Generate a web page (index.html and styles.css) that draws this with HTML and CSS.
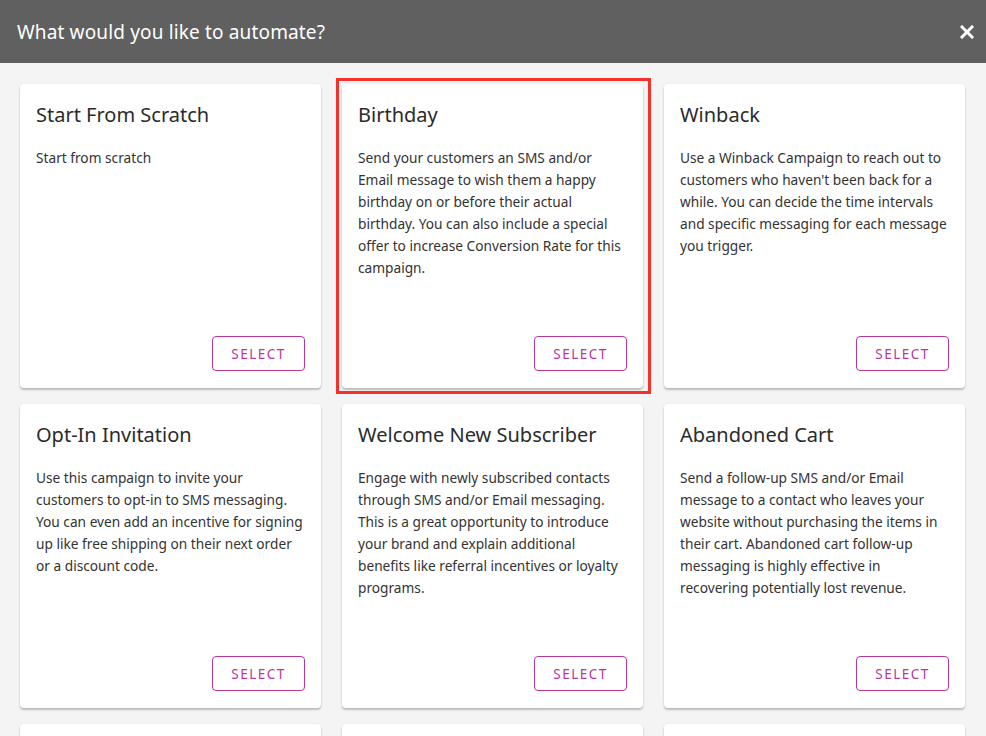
FILE: index.html
```html
<!DOCTYPE html>
<html lang="en">
<head>
    <meta charset="UTF-8">
    <title>Automations</title>
    <link rel="stylesheet" href="styles.css">
</head>
<body>

<div class="dialog">
    <div class="dialog-header">
        <h1 class="dialog-title">What would you like to automate?</h1>
        <button class="close-btn" aria-label="Close">
            <svg width="14" height="14" viewBox="0 0 14 14"><path d="M2 2 L12 12 M12 2 L2 12" stroke="#fff" stroke-width="3" stroke-linecap="square"/></svg>
        </button>
    </div>

    <div class="dialog-body">
        <div class="cards">
            <div class="card">
                <h2 class="card-title">Start From Scratch</h2>
                <p class="card-text">Start from scratch</p>
                <button class="select-btn">Select</button>
            </div>
            <div class="card selected">
                <h2 class="card-title">Birthday</h2>
                <p class="card-text">Send your customers an SMS and/or Email message to wish them a happy birthday on or before their actual birthday. You can also include a special offer to increase Conversion Rate for this campaign.</p>
                <button class="select-btn">Select</button>
            </div>
            <div class="card">
                <h2 class="card-title">Winback</h2>
                <p class="card-text">Use a Winback Campaign to reach out to customers who haven't been back for a while. You can decide the time intervals and specific messaging for each message you trigger.</p>
                <button class="select-btn">Select</button>
            </div>
            <div class="card">
                <h2 class="card-title">Opt-In Invitation</h2>
                <p class="card-text">Use this campaign to invite your customers to opt-in to SMS messaging. You can even add an incentive for signing up like free shipping on their next order or a discount code.</p>
                <button class="select-btn">Select</button>
            </div>
            <div class="card">
                <h2 class="card-title">Welcome New Subscriber</h2>
                <p class="card-text">Engage with newly subscribed contacts through SMS and/or Email messaging. This is a great opportunity to introduce your brand and explain additional benefits like referral incentives or loyalty programs.</p>
                <button class="select-btn">Select</button>
            </div>
            <div class="card">
                <h2 class="card-title">Abandoned Cart</h2>
                <p class="card-text">Send a follow-up SMS and/or Email message to a contact who leaves your website without purchasing the items in their cart. Abandoned cart follow-up messaging is highly effective in recovering potentially lost revenue.</p>
                <button class="select-btn">Select</button>
            </div>
            <div class="card"></div>
            <div class="card"></div>
            <div class="card"></div>
        </div>
    </div>
</div>

</body>
</html>
```

FILE: styles.css
```css
html, body {
    margin: 0;
    height: 100%;
    overflow: hidden;
}

body {
    font-family: "Noto Sans", "Open Sans", sans-serif;
    background-color: #f4f4f4;
    color: #2b2b2b;
}

/* Header */
.dialog-header {
    display: flex;
    align-items: center;
    justify-content: space-between;
    height: 63px;
    padding: 0 8px 0 17px;
    background-color: #606060;
}

.dialog-title {
    margin: 0;
    font-size: 19px;
    font-weight: 400;
    color: #fff;
    letter-spacing: 0.15px;
}

.close-btn {
    display: flex;
    padding: 4px;
    border: none;
    background: none;
    cursor: pointer;
}

/* Cards */
.dialog-body {
    padding: 21px 21px 0 20px;
}

.cards {
    display: grid;
    grid-template-columns: repeat(3, 301px);
    grid-auto-rows: 304px;
    column-gap: 21px;
    row-gap: 16px;
}

.card {
    position: relative;
    display: flex;
    flex-direction: column;
    padding: 18px 16px 17px 16px;
    box-sizing: border-box;
    background-color: #fff;
    border-radius: 4px;
    box-shadow: 0 2px 2px rgba(0, 0, 0, 0.22), 0 0 3px rgba(0, 0, 0, 0.06);
}

/* red highlight frame, square corners */
.card.selected::after {
    content: "";
    position: absolute;
    top: -6px;
    left: -6px;
    right: -8px;
    bottom: -6px;
    border: 3px solid #f4312b;
    pointer-events: none;
}

.card-title {
    margin: 0;
    font-size: 20px;
    font-weight: 400;
    line-height: 26px;
    color: #2b2b2b;
}

.card-text {
    margin: 19px -3px 0 0;
    font-size: 13.7px;
    line-height: 22px;
    color: #333;
}

.select-btn {
    margin-top: auto;
    align-self: flex-end;
    width: 93px;
    height: 35px;
    border: 1px solid #b8369f;
    border-radius: 4px;
    background: #fff;
    color: #b8369f;
    font-family: inherit;
    font-size: 13.5px;
    letter-spacing: 1.5px;
    text-transform: uppercase;
    cursor: pointer;
}
```
